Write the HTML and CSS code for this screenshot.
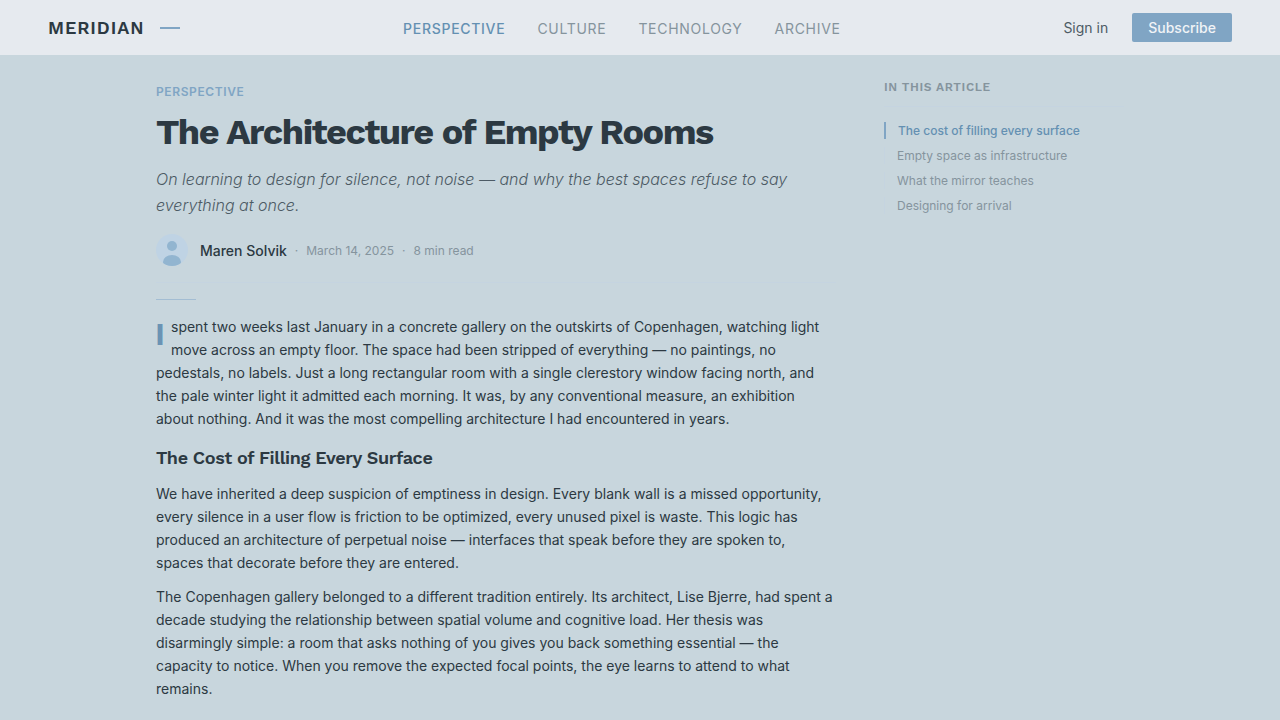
FILE: index.html
```html
<!DOCTYPE html>
<html lang="en">

<head>
    <meta charset="UTF-8">
    <meta name="viewport" content="width=device-width, initial-scale=1.0">
    <title>The Architecture of Empty Rooms - Meridian</title>
    <link rel="stylesheet" href="styles.css">
</head>

<body>
    <header class="header">
        <a class="logo" href="/">MERIDIAN</a>
        <nav class="nav">
            <a class="active" href="/perspective/">PERSPECTIVE</a>
            <a href="/culture/">CULTURE</a>
            <a href="/technology/">TECHNOLOGY</a>
            <a href="/archive/">ARCHIVE</a>
        </nav>
        <div class="actions">
            <a class="sign-in" href="/login/">Sign in</a>
            <button class="subscribe" type="button">Subscribe</button>
        </div>
    </header>

    <div class="layout">
        <main class="article">
            <a class="category" href="/perspective/">PERSPECTIVE</a>
            <h1>The Architecture of Empty Rooms</h1>
            <p class="subtitle">On learning to design for silence, not noise — and why the best spaces refuse to say everything at once.</p>
            <div class="byline">
                <svg class="avatar" viewBox="0 0 32 32" aria-hidden="true">
                    <defs>
                        <clipPath id="avatar-clip">
                            <circle cx="16" cy="16" r="16" />
                        </clipPath>
                    </defs>
                    <g clip-path="url(#avatar-clip)">
                        <rect width="32" height="32" fill="#bfd3e4" />
                        <circle cx="16" cy="12" r="5" fill="#92b5d0" />
                        <ellipse cx="16" cy="28" rx="9" ry="7" fill="#92b5d0" />
                    </g>
                </svg>
                <span class="author">Maren Solvik</span>
                <span class="meta">·</span>
                <time class="meta" datetime="2025-03-14">March 14, 2025</time>
                <span class="meta">·</span>
                <span class="meta">8 min read</span>
            </div>
            <hr class="rule">

            <div class="content">
                <p class="lead">I spent two weeks last January in a concrete gallery on the outskirts of Copenhagen, watching light move across an empty floor. The space had been stripped of everything — no paintings, no pedestals, no labels. Just a long rectangular room with a single clerestory window facing north, and the pale winter light it admitted each morning. It was, by any conventional measure, an exhibition about nothing. And it was the most compelling architecture I had encountered in years.</p>
                <h2 id="cost">The Cost of Filling Every Surface</h2>
                <p>We have inherited a deep suspicion of emptiness in design. Every blank wall is a missed opportunity, every silence in a user flow is friction to be optimized, every unused pixel is waste. This logic has produced an architecture of perpetual noise — interfaces that speak before they are spoken to, spaces that decorate before they are entered.</p>
                <p>The Copenhagen gallery belonged to a different tradition entirely. Its architect, Lise Bjerre, had spent a decade studying the relationship between spatial volume and cognitive load. Her thesis was disarmingly simple: a room that asks nothing of you gives you back something essential — the capacity to notice. When you remove the expected focal points, the eye learns to attend to what remains.</p>
            </div>
        </main>

        <aside class="toc">
            <h3>IN THIS ARTICLE</h3>
            <ul>
                <li><a class="active" href="#cost">The cost of filling every surface</a></li>
                <li><a href="#infrastructure">Empty space as infrastructure</a></li>
                <li><a href="#mirror">What the mirror teaches</a></li>
                <li><a href="#arrival">Designing for arrival</a></li>
            </ul>
        </aside>
    </div>
</body>

</html>
```

FILE: styles.css
```css
* {
    box-sizing: border-box;
}

body {
    margin: 0;
    background-color: #c8d6dd;
    color: #2c3942;
    font-family: Inter, "Liberation Sans", sans-serif;
    font-size: 14px;
    line-height: 23px;
}

a {
    color: inherit;
    text-decoration: none;
}

.header {
    display: flex;
    justify-content: space-between;
    align-items: center;
    padding: 13px 48px;
    background-color: #e6eaef;
    line-height: 17px;
}

.logo {
    display: flex;
    align-items: center;
    gap: 16px;
    font-family: "Work Sans", Inter, sans-serif;
    font-size: 18px;
    font-weight: 600;
    letter-spacing: 0.05em;
}

.logo::after {
    content: "";
    width: 20px;
    height: 2px;
    background-color: #80a5c4;
}

.nav {
    display: flex;
    gap: 32px;
    padding-top: 2px;
    color: #85949d;
    letter-spacing: 0.05em;
}

.nav .active {
    color: #6490b2;
    font-weight: 500;
}

.actions {
    display: flex;
    align-items: center;
    gap: 24px;
}

.sign-in {
    color: #4d5b65;
}

.subscribe {
    padding: 6px 16px;
    border: none;
    border-radius: 2px;
    background-color: #80a5c4;
    color: #f0f3f6;
    font: inherit;
    font-weight: 500;
    cursor: pointer;
}

.layout {
    display: grid;
    grid-template-columns: minmax(0, 680px) 240px;
    justify-content: center;
    gap: 48px;
    padding: 24px 48px;
}

.category {
    display: block;
    margin-top: 5px;
    color: #80a5c4;
    font-size: 12px;
    font-weight: 600;
    line-height: 16px;
    letter-spacing: 0.05em;
}

h1 {
    margin: 11px 0 13px;
    font-family: "Work Sans", Inter, sans-serif;
    font-size: 36px;
    font-weight: 700;
    line-height: 42px;
    letter-spacing: -0.04em;
}

.subtitle {
    margin: 0 0 16px;
    color: #4d5b65;
    font-size: 16px;
    font-style: italic;
    font-weight: 300;
    line-height: 26px;
}

.byline {
    display: flex;
    align-items: center;
    gap: 8px;
    padding-bottom: 16px;
    border-bottom: 1px solid #c5d4e0;
}

.avatar {
    width: 32px;
    height: 32px;
    margin-right: 4px;
}

.author {
    font-weight: 500;
}

.meta {
    color: #85949d;
    font-size: 12px;
}

.rule {
    width: 40px;
    height: 1px;
    margin: 16px 0 15px;
    border: none;
    background-color: #a3bdd3;
}

.content p {
    margin: 0 0 11px;
}

.lead::first-letter {
    float: left;
    margin-right: 7px;
    color: #6b93b4;
    font-size: 28px;
    font-weight: 800;
    line-height: 40px;
}

h2 {
    margin: 16px 0 12px;
    font-family: "Work Sans", Inter, sans-serif;
    font-size: 18px;
    font-weight: 600;
    line-height: 24px;
    letter-spacing: -0.02em;
}

.toc h3 {
    margin: 0 0 15px;
    padding-bottom: 11px;
    border-bottom: 1px solid #c5d4e0;
    color: #85949d;
    font-family: "Work Sans", Inter, sans-serif;
    font-size: 12px;
    font-weight: 600;
    line-height: 16px;
    letter-spacing: 0.05em;
}

.toc ul {
    display: flex;
    flex-direction: column;
    gap: 8px;
    margin: 0;
    padding: 0;
    list-style: none;
}

.toc li a {
    display: block;
    padding-left: 12px;
    border-left: 1px solid #c5d4e0;
    color: #85949d;
    font-size: 12px;
    line-height: 17px;
}

.toc li .active {
    border-left: 2px solid #80a5c4;
    color: #6490b2;
    font-weight: 500;
}

@media screen and (max-width: 900px) {
    .nav {
        display: none;
    }

    .layout {
        grid-template-columns: minmax(0, 680px);
    }

    .toc {
        display: none;
    }
}
```
